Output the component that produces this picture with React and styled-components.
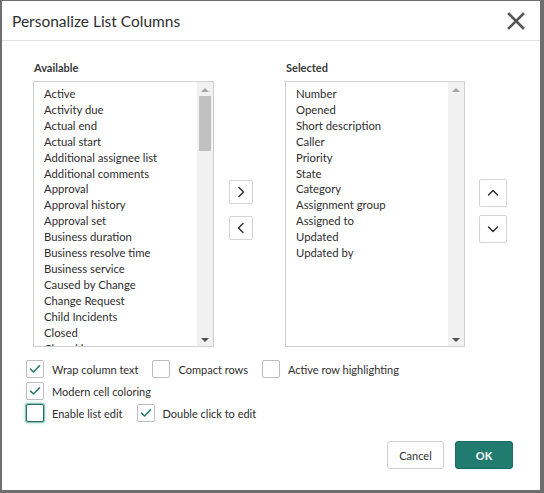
import React, { useState } from "react";
import styled, { createGlobalStyle } from "styled-components";

const available = [
  "Active", "Activity due", "Actual end", "Actual start", "Additional assignee list",
  "Additional comments", "Approval", "Approval history", "Approval set", "Business duration",
  "Business resolve time", "Business service", "Caused by Change", "Change Request",
  "Child Incidents", "Closed", "Closed by",
];

const selected = [
  "Number", "Opened", "Short description", "Caller", "Priority", "State", "Category",
  "Assignment group", "Assigned to", "Updated", "Updated by",
];

const GlobalStyle = createGlobalStyle`
  html, body { margin: 0; padding: 0; }
  body {
    background: #6e6e6e;
    font-family: "Lato", "Open Sans", sans-serif;
    color: #2e2e2e;
  }
  * { box-sizing: border-box; }
`;

const Page = styled.div`
  width: 544px;
  height: 493px;
  padding: 1px 4px 3px 2px;
`;

const Dialog = styled.div`
  width: 538px;
  height: 489px;
  background: #fff;
  display: flex;
  flex-direction: column;
`;

const Header = styled.div`
  height: 40px;
  border-bottom: 1px solid #e2e2e2;
  display: flex;
  align-items: center;
  justify-content: space-between;
  padding: 0 14px 0 10px;
`;

const Title = styled.h1`
  margin: 0;
  font-size: 15.5px;
  font-weight: 400;
  color: #2f2f2f;
`;

const Close = styled.button`
  border: none;
  background: none;
  padding: 0;
  width: 20px;
  height: 20px;
  display: flex;
  cursor: pointer;
`;

const Body = styled.div`
  padding: 20px 0 0 31px;
  flex: 1;
`;

const Columns = styled.div`
  display: flex;
`;

const Column = styled.div`
  display: flex;
  flex-direction: column;
`;

const Label = styled.div`
  font-size: 11px;
  font-weight: 700;
  color: #3a3a3a;
  height: 14px;
  margin-bottom: 6px;
  padding-left: 1px;
`;

const ListBox = styled.div`
  width: ${(p) => p.$width}px;
  height: 266px;
  border: 1px solid #cfcfcf;
  display: flex;
  overflow: hidden;
`;

const Items = styled.div`
  flex: 1;
  padding: 4px 0 0 10px;
  overflow: hidden;
`;

const Item = styled.div`
  font-size: 11.3px;
  line-height: 15.9px;
  white-space: nowrap;
  color: #2e2e2e;
`;

const Scrollbar = styled.div`
  width: 16px;
  background: #f1f1f1;
  display: flex;
  flex-direction: column;
  align-items: center;
  justify-content: space-between;
  padding: 6px 0 4px;
`;

const ScrollTrack = styled.div`
  flex: 1;
  display: flex;
  flex-direction: column;
  align-items: center;
`;

const Thumb = styled.div`
  width: 12px;
  height: 55px;
  background: #c1c1c1;
  margin-top: 4px;
`;

const Arrow = styled.div`
  width: 0;
  height: 0;
  border-left: 4px solid transparent;
  border-right: 4px solid transparent;
  ${(p) => (p.$up ? "border-bottom: 4px solid #a3a3a3;" : "border-top: 4px solid #505050;")}
`;

const MoveButtons = styled.div`
  display: flex;
  flex-direction: column;
  gap: ${(p) => p.$gap}px;
  padding: ${(p) => p.$top}px ${(p) => p.$right}px 0 ${(p) => p.$left}px;
`;

const IconButton = styled.button`
  width: ${(p) => p.$size}px;
  height: ${(p) => p.$size}px;
  border: 1px solid #d4d4d4;
  border-radius: 2px;
  background: #fff;
  padding: 0;
  display: flex;
  align-items: center;
  justify-content: center;
  cursor: pointer;
`;

const Options = styled.div`
  margin: 13px 0 0 -7px;
  display: flex;
  flex-direction: column;
  gap: 4px;
`;

const OptionRow = styled.div`
  display: flex;
  align-items: center;
`;

const Option = styled.label`
  display: flex;
  align-items: center;
  gap: 8px;
  margin-right: ${(p) => p.$gap}px;
  font-size: 11px;
  color: #2e2e2e;
  cursor: pointer;
`;

const Box = styled.span`
  width: 18px;
  height: 18px;
  border: 1px solid ${(p) => (p.$focus ? "#2c6b62" : "#bdbdbd")};
  border-radius: 2px;
  background: #fff;
  display: flex;
  align-items: center;
  justify-content: center;
  box-shadow: ${(p) => (p.$focus ? "0 0 0 1px #8fc6bd, 0 0 3px 1px #9ed3ca" : "none")};
`;

const Footer = styled.div`
  display: flex;
  justify-content: flex-end;
  gap: 11px;
  padding: 0 27px 21px 0;
`;

const Button = styled.button`
  height: 28px;
  min-width: ${(p) => p.$width}px;
  border-radius: 3px;
  font-family: inherit;
  font-size: 11px;
  cursor: pointer;
  border: 1px solid ${(p) => (p.$primary ? "#1a6d63" : "#cfcfcf")};
  background: ${(p) => (p.$primary ? "#217b6f" : "#fff")};
  color: ${(p) => (p.$primary ? "#fff" : "#2e2e2e")};
  font-weight: ${(p) => (p.$primary ? 700 : 400)};
`;

const Chevron = ({ d }) => (
  <svg width="14" height="14" viewBox="0 0 14 14" fill="none" stroke="#2b2b2b" strokeWidth="1.4" strokeLinecap="round" strokeLinejoin="round">
    <path d={d} />
  </svg>
);

const List = ({ items, width, thumb }) => (
  <ListBox $width={width}>
    <Items>
      {items.map((t) => (
        <Item key={t}>{t}</Item>
      ))}
    </Items>
    <Scrollbar>
      <ScrollTrack>
        <Arrow $up />
        {thumb && <Thumb />}
      </ScrollTrack>
      <Arrow />
    </Scrollbar>
  </ListBox>
);

const Check = ({ checked, focus, label, gap = 0, onToggle }) => (
  <Option $gap={gap} onClick={onToggle}>
    <Box $focus={focus}>
      {checked && (
        <svg width="12" height="10" viewBox="0 0 12 10" fill="none" stroke="#2a7a6e" strokeWidth="1.6" strokeLinecap="round" strokeLinejoin="round">
          <path d="M1.5 5.2 L4.5 8 L10.5 1.8" />
        </svg>
      )}
    </Box>
    {label}
  </Option>
);

export default function App() {
  const [opts, setOpts] = useState({
    wrap: true, compact: false, active: false, modern: true, edit: false, dbl: true,
  });
  const toggle = (k) => () => setOpts((o) => ({ ...o, [k]: !o[k] }));

  return (
    <>
      <GlobalStyle />
      <Page>
        <Dialog>
          <Header>
            <Title>Personalize List Columns</Title>
            <Close aria-label="Close">
              <svg width="20" height="20" viewBox="0 0 20 20" stroke="#555" strokeWidth="2.6" strokeLinecap="square">
                <path d="M3 3 L17 17 M17 3 L3 17" />
              </svg>
            </Close>
          </Header>
          <Body>
            <Columns>
              <Column>
                <Label>Available</Label>
                <List items={available} width={181} thumb />
              </Column>
              <MoveButtons $top={119} $gap={12} $left={15} $right={32}>
                <IconButton $size={24} aria-label="Add">
                  <Chevron d="M5 2.5 L9.5 7 L5 11.5" />
                </IconButton>
                <IconButton $size={24} aria-label="Remove">
                  <Chevron d="M9 2.5 L4.5 7 L9 11.5" />
                </IconButton>
              </MoveButtons>
              <Column>
                <Label>Selected</Label>
                <List items={selected} width={180} />
              </Column>
              <MoveButtons $top={118} $gap={8} $left={14} $right={0}>
                <IconButton $size={28} aria-label="Move up">
                  <Chevron d="M2.5 9 L7 4.5 L11.5 9" />
                </IconButton>
                <IconButton $size={28} aria-label="Move down">
                  <Chevron d="M2.5 5 L7 9.5 L11.5 5" />
                </IconButton>
              </MoveButtons>
            </Columns>
            <Options>
              <OptionRow>
                <Check checked={opts.wrap} label="Wrap column text" gap={14} onToggle={toggle("wrap")} />
                <Check checked={opts.compact} label="Compact rows" gap={14} onToggle={toggle("compact")} />
                <Check checked={opts.active} label="Active row highlighting" onToggle={toggle("active")} />
              </OptionRow>
              <OptionRow>
                <Check checked={opts.modern} label="Modern cell coloring" onToggle={toggle("modern")} />
              </OptionRow>
              <OptionRow>
                <Check checked={opts.edit} focus label="Enable list edit" gap={14} onToggle={toggle("edit")} />
                <Check checked={opts.dbl} label="Double click to edit" onToggle={toggle("dbl")} />
              </OptionRow>
            </Options>
          </Body>
          <Footer>
            <Button $width={57}>Cancel</Button>
            <Button $primary $width={58}>OK</Button>
          </Footer>
        </Dialog>
      </Page>
    </>
  );
}
